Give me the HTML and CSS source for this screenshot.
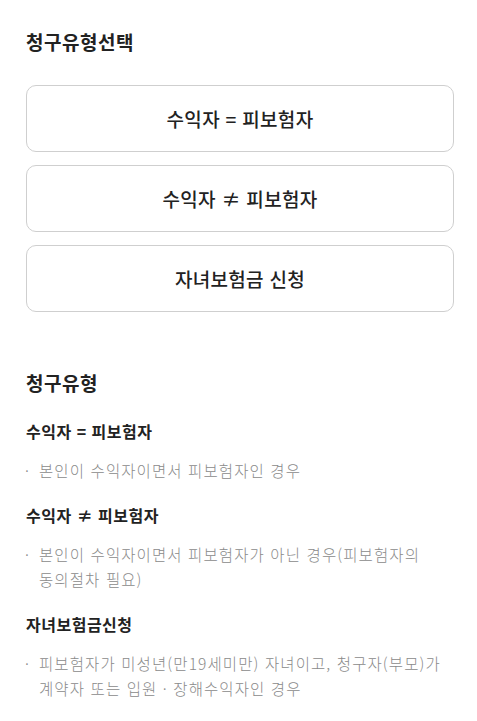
FILE: index.html
```html
<!DOCTYPE html>
<html lang="ko">
<head>
    <meta charset="UTF-8">
    <meta name="viewport" content="width=device-width, initial-scale=1.0">
    <title>청구유형선택</title>

    <link rel="stylesheet" href="styles.css">
</head>
<body>
    <div class="container">
        <h2 class="title">청구유형선택</h2>

        <div class="type-list">
            <button type="button" class="type-btn">수익자 = 피보험자</button>
            <button type="button" class="type-btn">수익자 ≠ 피보험자</button>
            <button type="button" class="type-btn">자녀보험금 신청</button>
        </div>

        <div class="guide">
            <h3 class="guide-title">청구유형</h3>

            <h4 class="guide-sub">수익자 = 피보험자</h4>
            <p class="guide-text">본인이 수익자이면서 피보험자인 경우</p>

            <h4 class="guide-sub">수익자 ≠ 피보험자</h4>
            <p class="guide-text">본인이 수익자이면서 피보험자가 아닌 경우(피보험자의 동의절차 필요)</p>

            <h4 class="guide-sub">자녀보험금신청</h4>
            <p class="guide-text">피보험자가 미성년(만19세미만) 자녀이고, 청구자(부모)가 계약자 또는 입원 · 장해수익자인 경우</p>
        </div>
    </div>
</body>
</html>
```

FILE: styles.css
```css
* {
    box-sizing: border-box;
}

body {
    margin: 0;
    padding: 0;
    background: #ffffff;
    font-family: 'Noto Sans CJK KR', 'Noto Sans', sans-serif;
    color: #222;
    word-break: keep-all;
}

.container {
    padding: 29px 23px 0 26px;
}

.title {
    margin: 0;
    font-size: 19px;
    line-height: 26px;
    letter-spacing: 0.5px;
    font-weight: bold;
    color: #222;
}

.type-list {
    display: flex;
    flex-direction: column;
    gap: 13px;
    margin-top: 30px;
}

.type-btn {
    width: 100%;
    height: 67px;
    background: #fff;
    border: 1px solid #cfcfcf;
    border-radius: 10px;
    font-family: inherit;
    font-size: 19px;
    letter-spacing: 0.3px;
    font-weight: 500;
    color: #222;
    cursor: pointer;
}

.guide {
    margin-top: 58px;
}

.guide-title {
    margin: 0;
    font-size: 19px;
    line-height: 26px;
    letter-spacing: 0.5px;
    font-weight: bold;
    color: #222;
}

.guide-sub {
    margin: 20px 0 0;
    font-size: 16px;
    line-height: 24px;
    letter-spacing: 0.5px;
    font-weight: bold;
    color: #222;
}

.guide-title + .guide-sub {
    margin-top: 23px;
}

.guide-text {
    position: relative;
    margin: 15px 0 0;
    padding-left: 13px;
    padding-right: 3px;
    font-size: 15.5px;
    line-height: 25px;
    letter-spacing: 1.1px;
    font-weight: 300;
    color: #8a8a8a;
}

.guide-text::before {
    content: "·";
    position: absolute;
    left: -1px;
    top: 0;
}
```
